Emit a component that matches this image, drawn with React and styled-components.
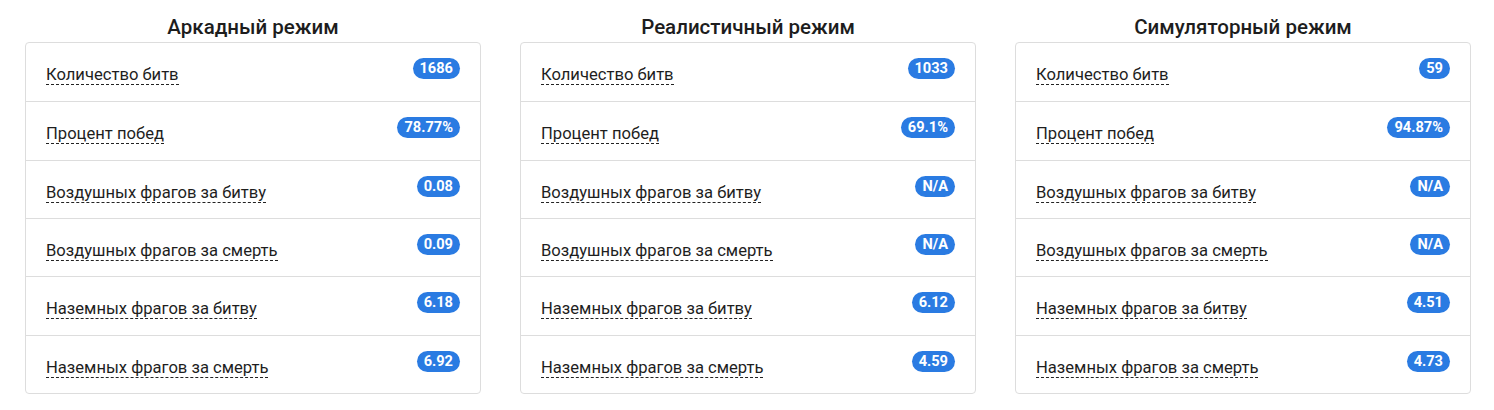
import styled, { createGlobalStyle } from 'styled-components'

const GlobalStyle = createGlobalStyle`
    body {
        margin: 0;
        background: #fff;
        font-family: Roboto, "Noto Sans", sans-serif;
        color: #222;
    }
`;

const Page = styled.div`
    display: grid;
    grid-template-columns: repeat(3, 456px);
    column-gap: 39px;
    padding: 15px 24px 0 25px;
`;

const Column = styled.section`
    display: flex;
    flex-direction: column;
`;

const Title = styled.h3`
    margin: 0 0 3px;
    font-size: 20.5px;
    line-height: 24px;
    font-weight: 500;
    text-align: center;
    color: #1d1d1d;
`;

const Card = styled.ul`
    list-style: none;
    margin: 0;
    padding: 0;
    border: 1px solid #ddd;
    border-radius: 4px;
`;

const Row = styled.li`
    display: flex;
    justify-content: space-between;
    align-items: flex-start;
    box-sizing: border-box;
    height: 58.33px;
    padding: 15px 20px 0 20px;

    & + & {
        border-top: 1px solid #ddd;
    }
`;

const Label = styled.span`
    margin-top: 8px;
    font-size: 16.6px;
    line-height: 18px;
    color: #1e1e1e;
    border-bottom: 1px dashed #222;
`;

const Badge = styled.span`
    display: inline-block;
    padding: 3px 7px;
    font-size: 14.6px;
    line-height: 15px;
    font-weight: 700;
    color: #fff;
    background-color: #2a7be2;
    border-radius: 11px;
`;

const labels = [
    'Количество битв',
    'Процент побед',
    'Воздушных фрагов за битву',
    'Воздушных фрагов за смерть',
    'Наземных фрагов за битву',
    'Наземных фрагов за смерть',
];

const modes = [
    { title: 'Аркадный режим', values: ['1686', '78.77%', '0.08', '0.09', '6.18', '6.92'] },
    { title: 'Реалистичный режим', values: ['1033', '69.1%', 'N/A', 'N/A', '6.12', '4.59'] },
    { title: 'Симуляторный режим', values: ['59', '94.87%', 'N/A', 'N/A', '4.51', '4.73'] },
];

const App = () => {
  return (
    <>
    <GlobalStyle />
    <Page>
        {modes.map((mode) => (
            <Column key={mode.title}>
                <Title>{mode.title}</Title>
                <Card>
                    {labels.map((label, i) => (
                        <Row key={label}>
                            <Label>{label}</Label>
                            <Badge>{mode.values[i]}</Badge>
                        </Row>
                    ))}
                </Card>
            </Column>
        ))}
    </Page>
    </>
  )
}

export default App
